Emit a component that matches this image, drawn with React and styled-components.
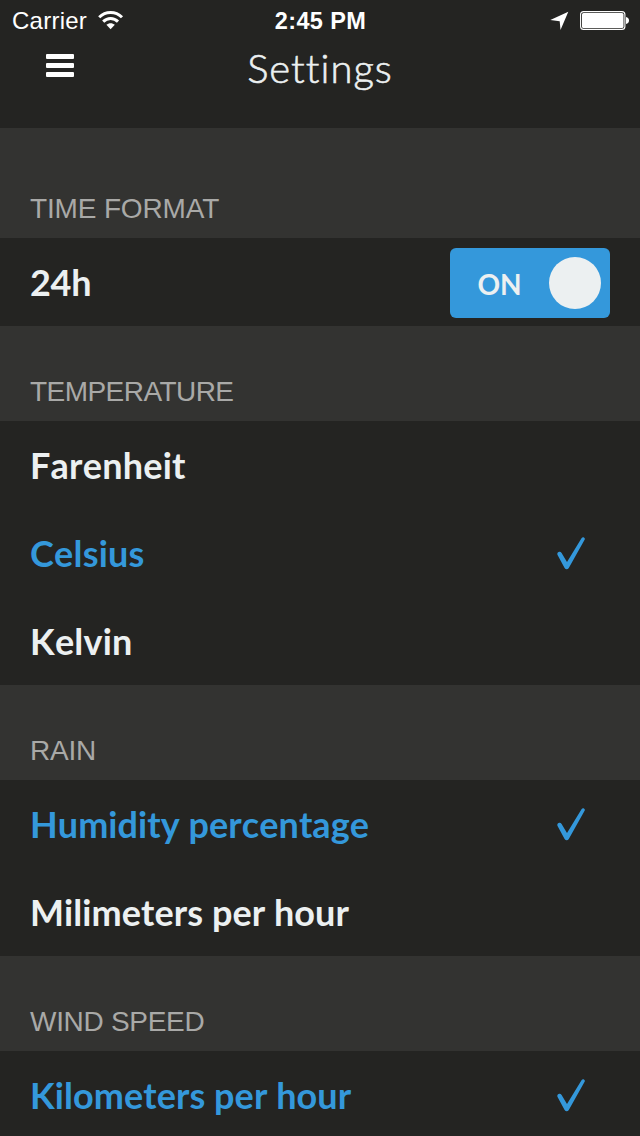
import React from "react";
import styled, { createGlobalStyle } from "styled-components";

const colors = {
  dark: "#242422",
  section: "#333331",
  muted: "#a9a9a7",
  light: "#ecf0f1",
  blue: "#3498db",
};

const GlobalStyle = createGlobalStyle`
  *, *::before, *::after { box-sizing: border-box; }
  html, body { margin: 0; background: ${colors.dark}; }
  body { overflow: hidden; }
`;

const Screen = styled.main`
  width: 640px;
  height: 1136px;
  overflow: hidden;
  background: ${colors.dark};
  font-family: Lato, sans-serif;
`;

const StatusBar = styled.div`
  display: grid;
  grid-template-columns: 1fr auto 1fr;
  align-items: center;
  height: 40px;
  padding: 0 11px 0 12px;
  color: #fff;
  font-family: "Liberation Sans", sans-serif;
  font-size: 24px;
  line-height: 40px;
`;

const StatusLeft = styled.div`
  display: flex;
  align-items: center;
  gap: 11px;
`;

const Carrier = styled.span`
  padding-top: 2px;
  line-height: 38px;
  letter-spacing: 0.25px;
`;

const Clock = styled.span`
  padding-top: 2px;
  font-weight: 700;
  font-size: 23.5px;
  line-height: 38px;
  letter-spacing: 0.35px;
`;

const StatusRight = styled.div`
  display: flex;
  align-items: center;
  justify-content: flex-end;
  gap: 11px;
`;

const NavBar = styled.header`
  display: grid;
  grid-template-columns: 1fr auto 1fr;
  align-items: start;
  height: 88px;
`;

const MenuButton = styled.button`
  display: flex;
  width: 28px;
  margin: 14px 0 0 46px;
  padding: 0;
  border: 0;
  background: none;
`;

const Title = styled.h1`
  margin: 3px 0 0;
  color: ${colors.light};
  font-size: 40px;
  font-weight: 300;
  line-height: 50px;
  letter-spacing: 1px;
  -webkit-text-stroke: 0.6px ${colors.light};
`;

const SectionHeader = styled.h2`
  display: flex;
  align-items: flex-end;
  height: ${(p) => (p.$first ? 110 : 95)}px;
  margin: 0;
  padding: 0 30px 13px;
  background: ${colors.section};
  color: ${colors.muted};
  font-family: "Liberation Sans", sans-serif;
  font-size: 28px;
  font-weight: 400;
  line-height: 32px;
  letter-spacing: ${(p) => p.$tracking || 0}px;
`;

const Row = styled.div`
  display: flex;
  align-items: center;
  justify-content: space-between;
  height: 88px;
  padding: 0 ${(p) => (p.$control ? 30 : 54)}px 0 30px;
  color: ${(p) => (p.$selected ? colors.blue : colors.light)};
`;

const Label = styled.span`
  font-size: 36px;
  font-weight: 700;
  line-height: 44px;
  font-kerning: none;
  letter-spacing: ${(p) => p.$tracking || 0}px;
`;

const Toggle = styled.button`
  display: flex;
  align-items: center;
  justify-content: space-between;
  width: 160px;
  height: 70px;
  margin-top: 2px;
  padding: 0 9px 0 27.5px;
  border: 0;
  border-radius: 6px;
  background: ${colors.blue};
  color: ${colors.light};
  font-family: Lato, sans-serif;
  font-size: 28px;
  font-weight: 700;
  line-height: 34px;
`;

const ToggleText = styled.span`
  padding-top: 2px;
`;

const Knob = styled.span`
  width: 52px;
  height: 52px;
  border-radius: 50%;
  background: ${colors.light};
`;

const WifiIcon = () => (
  <svg width="26" height="20" viewBox="0 0 26 20" fill="none" stroke="#fff" strokeWidth="3">
    <path d="M1.200 7.200C7.600 .9 17.600 .9 24 7.200" />
    <path d="M5.200 11.600c4.200-4.100 10.600-4.100 14.800 0" />
    <path d="M12.600 19.200l-4.200-4.400c2.400-2.200 6-2.200 8.400 0z" fill="#fff" stroke="none" />
  </svg>
);

const LocationIcon = () => (
  <svg width="19" height="20" viewBox="0 0 19 20" fill="#fff">
    <path d="M18.300 1.700L10.500 20L9.700 11.200L.3 10z" />
  </svg>
);

const BatteryIcon = () => (
  <svg width="49" height="20" viewBox="0 0 49 20">
    <rect x=".6" y="1.600" width="44.300" height="17.800" rx="3" fill="none" stroke="#fff" strokeWidth="1.100" />
    <rect x="2" y="3" width="41.500" height="15" rx="1.500" fill="#fff" />
    <path d="M46 7c4 .7 4 6.300 0 7z" fill="#fff" />
  </svg>
);

const MenuIcon = () => (
  <svg width="28" height="24" viewBox="0 0 28 24" fill="#fff">
    <rect y="0" width="28" height="5" rx="1" />
    <rect y="9" width="28" height="5" rx="1" />
    <rect y="18" width="28" height="5" rx="1" />
  </svg>
);

const CheckIcon = () => (
  <svg width="30" height="34" viewBox="0 0 30 34" fill="currentColor">
    <path d="M1.700 19.300C.8 17.800 1.500 16.200 3.100 15.800c1-.2 1.900.2 2.500 1.100L11 26L25.500 2.300c.6-1 1.500-1.400 2.400-.9s1.300 1.400.7 2.400L12.800 32c-1 1.600-3.200 1.600-4.200 0z" />
  </svg>
);

const groups = [
  {
    title: "TEMPERATURE",
    tracking: -0.55,
    options: [
      { name: "Farenheit", tracking: 0.22 },
      { name: "Celsius", tracking: 0.22, selected: true },
      { name: "Kelvin", tracking: 0.2 },
    ],
  },
  {
    title: "RAIN",
    tracking: -0.25,
    options: [
      { name: "Humidity percentage", tracking: 0.06, selected: true },
      { name: "Milimeters per hour", tracking: 0.06 },
    ],
  },
  {
    title: "WIND SPEED",
    tracking: -0.3,
    options: [{ name: "Kilometers per hour", tracking: 0.06, selected: true }],
  },
];

export default function App() {
  return (
    <Screen>
      <GlobalStyle />
      <StatusBar>
        <StatusLeft>
          <Carrier>Carrier</Carrier>
          <WifiIcon />
        </StatusLeft>
        <Clock>2:45 PM</Clock>
        <StatusRight>
          <LocationIcon />
          <BatteryIcon />
        </StatusRight>
      </StatusBar>
      <NavBar>
        <MenuButton aria-label="Menu">
          <MenuIcon />
        </MenuButton>
        <Title>Settings</Title>
      </NavBar>
      <section>
        <SectionHeader $first $tracking={-0.15}>TIME FORMAT</SectionHeader>
        <Row $control>
          <Label $tracking={-0.3}>24h</Label>
          <Toggle role="switch" aria-checked="true">
            <ToggleText>ON</ToggleText>
            <Knob />
          </Toggle>
        </Row>
      </section>
      {groups.map((group) => (
        <section key={group.title}>
          <SectionHeader $tracking={group.tracking}>{group.title}</SectionHeader>
          {group.options.map((option) => (
            <Row key={option.name} $selected={option.selected}>
              <Label $tracking={option.tracking}>{option.name}</Label>
              {option.selected && <CheckIcon />}
            </Row>
          ))}
        </section>
      ))}
    </Screen>
  );
}
